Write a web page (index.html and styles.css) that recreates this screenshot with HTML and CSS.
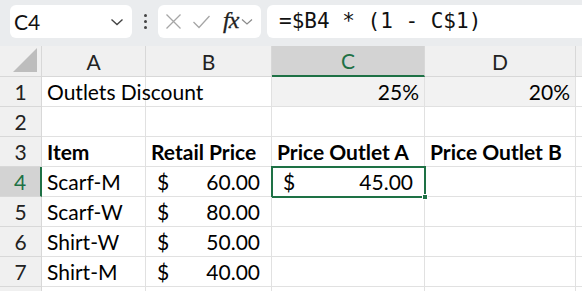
FILE: index.html
```html
<!DOCTYPE html>
<html>
<head>
<meta charset="utf-8">
<link rel="stylesheet" href="styles.css">
</head>
<body>
<div class="app">
  <div class="toolbar">
    <div class="namebox">
      <span class="name">C4</span>
      <svg class="chev" width="14" height="8" viewBox="0 0 14 8"><path d="M1.5 1.5 L7 6.5 L12.5 1.5" fill="none" stroke="#444" stroke-width="1.4"/></svg>
    </div>
    <div class="dots"><span></span><span></span><span></span></div>
    <div class="fxbox">
      <svg class="ic" width="17" height="17" viewBox="0 0 17 17"><path d="M1.5 1.5 L15.5 15.5 M15.5 1.5 L1.5 15.5" stroke="#a6a6a6" stroke-width="1.3" fill="none"/></svg>
      <svg class="ic" width="19" height="17" viewBox="0 0 19 17"><path d="M1.5 9 L7 14.5 L17.5 3" stroke="#a6a6a6" stroke-width="1.3" fill="none"/></svg>
      <span class="fx">fx</span>
      <svg class="chev2" width="12" height="8" viewBox="0 0 12 8"><path d="M1 1.5 L6 6 L11 1.5" fill="none" stroke="#8a8a8a" stroke-width="1.2"/></svg>
    </div>
    <div class="formula">=$B4 * (1 - C$1)</div>
  </div>
  <div class="sheet">
    <div class="hd corner"><span class="tri"></span></div>
    <div class="hd col">A</div>
    <div class="hd col">B</div>
    <div class="hd col sel">C</div>
    <div class="hd col">D</div>
    <div class="hd col"></div>

    <div class="hd row">1</div>
    <div class="c">Outlets Discount</div>
    <div class="c"></div>
    <div class="c shade r">25%</div>
    <div class="c shade r">20%</div>
    <div class="c"></div>

    <div class="hd row">2</div>
    <div class="c"></div><div class="c"></div><div class="c"></div><div class="c"></div><div class="c"></div>

    <div class="hd row">3</div>
    <div class="c b">Item</div>
    <div class="c b">Retail Price</div>
    <div class="c b">Price Outlet A</div>
    <div class="c b">Price Outlet B</div>
    <div class="c"></div>

    <div class="hd row rsel">4</div>
    <div class="c">Scarf-M</div>
    <div class="c acc"><span>$</span><span>60.00</span></div>
    <div class="c acc active"><span>$</span><span>45.00</span><i class="handle"></i></div>
    <div class="c"></div>
    <div class="c"></div>

    <div class="hd row">5</div>
    <div class="c">Scarf-W</div>
    <div class="c acc"><span>$</span><span>80.00</span></div>
    <div class="c"></div><div class="c"></div><div class="c"></div>

    <div class="hd row">6</div>
    <div class="c">Shirt-W</div>
    <div class="c acc"><span>$</span><span>50.00</span></div>
    <div class="c"></div><div class="c"></div><div class="c"></div>

    <div class="hd row">7</div>
    <div class="c">Shirt-M</div>
    <div class="c acc"><span>$</span><span>40.00</span></div>
    <div class="c"></div><div class="c"></div><div class="c"></div>

    <div class="hd row"></div>
    <div class="c"></div><div class="c"></div><div class="c"></div><div class="c"></div><div class="c"></div>
  </div>
</div>
</body>
</html>
```
FILE: styles.css
```css
* { box-sizing: border-box; }
html, body { margin: 0; padding: 0; }
body { width: 582px; height: 291px; overflow: hidden; background: #fff; font-family: "Lato", "Liberation Sans", sans-serif; color: #000; }
.app { display: flex; flex-direction: column; }
.toolbar { height: 46px; background: #eaecee; display: flex; align-items: flex-start; padding: 5px 0 0 10px; }
.namebox { width: 122px; height: 33px; background: #fff; border-radius: 6px; display: flex; align-items: center; justify-content: space-between; padding: 0 8px 0 4px; }
.name { font-size: 21px; color: #111; }
.dots { width: 26px; height: 33px; display: flex; flex-direction: column; align-items: center; justify-content: center; gap: 3px; }
.dots span { width: 3px; height: 3px; background: #444; border-radius: 50%; }
.fxbox { width: 103px; height: 33px; background: #fff; border-radius: 6px; display: flex; align-items: center; padding: 0 3px 0 7px; gap: 0; }
.fxbox .ic { margin-right: 10px; }
.fx { font-family: "Liberation Serif", serif; font-style: italic; font-size: 24px; color: #222; margin: -3px 3px 0 2px; letter-spacing: -1px; -webkit-text-stroke: 0.3px #222; }
.formula { flex: 1; margin-left: 6px; height: 33px; background: #fff; border-radius: 6px 0 0 6px; font-family: "DejaVu Sans Mono", "Liberation Mono", monospace; font-size: 21px; line-height: 33px; padding-left: 12px; color: #111; }
.sheet { display: grid; grid-template-columns: 42px 104px 126px 153px 151px 1fr; grid-auto-rows: 30px; grid-template-rows: 31px; }
.hd { background: #f0f0f0; color: #222; font-size: 21px; display: flex; align-items: center; justify-content: center; border-right: 1px solid #d8d8d8; border-bottom: 1px solid #d8d8d8; }
.corner { position: relative; }
.tri { position: absolute; right: 4px; bottom: 4px; width: 0; height: 0; border-left: 24px solid transparent; border-bottom: 24px solid #bdbdbd; }
.col.sel { background: #d3d3d3; color: #1e7145; border-bottom: 2px solid #1e7145; }
.row.rsel { background: #d3d3d3; color: #1e7145; border-right: 2px solid #1e7145; }
.c { font-size: 21px; border-right: 1px solid #e1e1e1; border-bottom: 1px solid #e1e1e1; display: flex; align-items: center; padding: 0 5px; white-space: nowrap; position: relative; }
.shade { background: #f2f2f2; }
.r { justify-content: flex-end; }
.b { font-weight: bold; }
.acc { justify-content: space-between; padding: 0 11px 0 11px; }
.active { outline: 2px solid #1e7145; outline-offset: -1px; }
.handle { position: absolute; right: -4px; bottom: -4px; width: 6px; height: 6px; background: #1e7145; border: 1px solid #fff; z-index: 2; }
```
